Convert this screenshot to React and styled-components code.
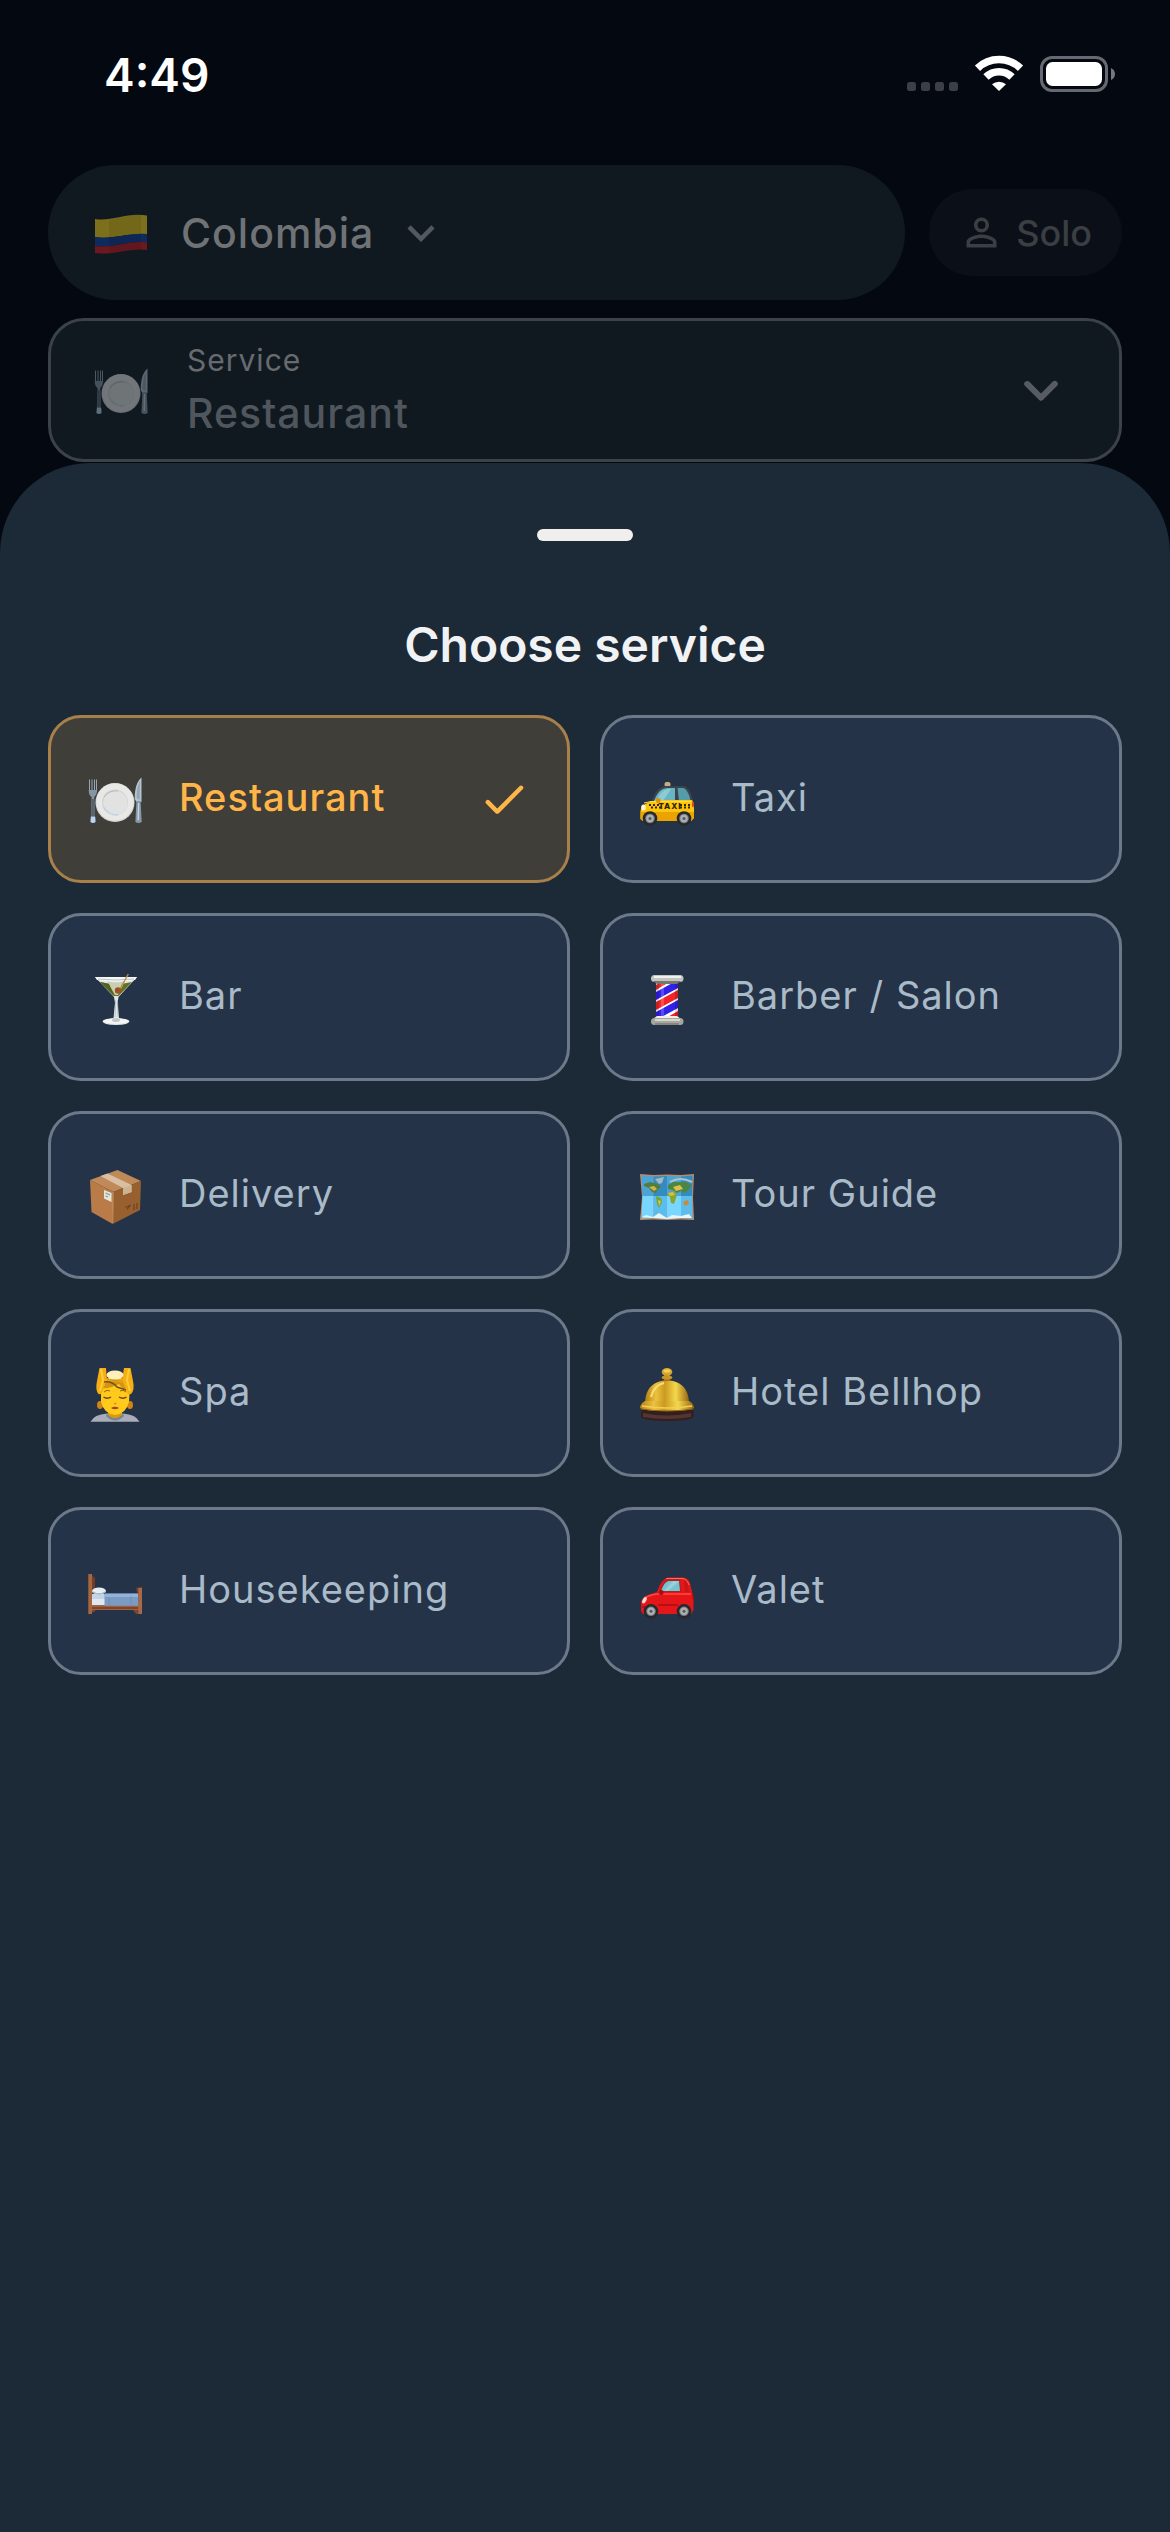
import React, { useState } from 'react';
import styled, { createGlobalStyle } from 'styled-components';

const GlobalStyle = createGlobalStyle`
  * {
    box-sizing: border-box;
  }

  body {
    margin: 0;
    background: #040811;
    font-family: Inter, Roboto, sans-serif;
  }

  button {
    font-family: inherit;
    cursor: pointer;
  }
`

const Screen = styled.div`
  display: flex;
  flex-direction: column;
  min-height: 100vh;
  background: #040811;
`

const StatusBar = styled.div`
  display: flex;
  align-items: center;
  justify-content: space-between;
  height: 150px;
  padding: 0 54px 0 104px;
`

const Clock = styled.time`
  color: #ffffff;
  font-size: 46px;
  font-weight: 600;
  line-height: 60px;
`

const StatusIcons = styled.svg`
  display: block;
  width: 210px;
  height: 40px;
`

const Header = styled.header`
  display: flex;
  flex-direction: column;
  gap: 18px;
  padding: 15px 48px 0;
`

const HeaderRow = styled.div`
  display: flex;
  align-items: center;
  gap: 24px;
`

const CountryButton = styled.button`
  display: flex;
  flex: 1;
  align-items: center;
  height: 135px;
  padding: 0 45px;
  border: 0;
  border-radius: 68px;
  background: #111920;
  color: #707376;
  font-size: 41px;
  font-weight: 500;
  letter-spacing: 1px;
`

const CountryName = styled.span`
  margin: 0 20px 0 32px;
`

const PartyButton = styled.button`
  display: flex;
  align-items: center;
  gap: 12px;
  height: 87px;
  padding: 0 30px;
  border: 0;
  border-radius: 44px;
  background: #0b1018;
  color: #3b3e42;
  font-size: 36px;
  font-weight: 500;
`

const ServiceField = styled.button`
  display: flex;
  align-items: center;
  min-height: 144px;
  padding: 0 42px;
  border: 3px solid #3b424a;
  border-radius: 36px;
  background: #111920;
  letter-spacing: 1px;
  text-align: left;
`

const FieldText = styled.span`
  display: flex;
  flex: 1;
  flex-direction: column;
  margin-left: 38px;
`

const FieldLabel = styled.span`
  color: #676b70;
  font-size: 30px;
  line-height: 45px;
`

const FieldValue = styled.span`
  color: #4f565d;
  font-size: 41px;
  font-weight: 500;
  line-height: 60px;
`

const Sheet = styled.section`
  flex: 1;
  margin-top: 1px;
  padding: 66px 48px;
  border-radius: 90px 90px 0 0;
  background: #1c2937;
`

const Handle = styled.div`
  width: 96px;
  height: 12px;
  margin: 0 auto;
  border-radius: 6px;
  background: #f1efee;
`

const Title = styled.h1`
  margin: 74px 0 40px;
  color: #f1f2f4;
  font-size: 48px;
  font-weight: 600;
  line-height: 60px;
  text-align: center;
`

const ServiceGrid = styled.div`
  display: grid;
  grid-template-columns: 1fr 1fr;
  gap: 30px;
`

const ServiceCard = styled.button`
  display: flex;
  align-items: center;
  height: 168px;
  padding: 0 36px;
  border: 3px solid ${props => props.$selected ? '#a88049' : '#6c798a'};
  border-radius: 33px;
  background: ${props => props.$selected ? '#403e39' : '#243347'};
  color: ${props => props.$selected ? '#ffb547' : '#a9bac8'};
  font-size: 38px;
  font-weight: ${props => props.$selected ? 500 : 400};
  letter-spacing: 1px;
  text-align: left;
`

const ServiceName = styled.span`
  flex: 1;
  margin-left: 36px;
  padding-bottom: 4px;
`

const Picture = styled.svg`
  display: block;
  flex: none;
  width: 56px;
  height: 60px;
  opacity: ${props => props.$dim ? 0.45 : 1};
`

const Glyph = styled.svg`
  display: block;
  flex: none;
  width: ${props => props.$size}px;
  height: ${props => props.$size}px;
  fill: ${props => props.$color || 'currentColor'};
`

const Emoji = ({ dim, children }) => (
  <Picture viewBox="0 0 56 60" aria-hidden="true" $dim={dim}>{children}</Picture>
)

const Icon = ({ size, color, d }) => (
  <Glyph viewBox="0 0 24 24" aria-hidden="true" $size={size} $color={color}><path d={d} /></Glyph>
)

const FlagEmoji = () => (
  <Emoji>
    <path d="M2 16C18 19 34 9 54 12.500V32C36 29 20 37 2 34Z" fill="#7d701c" />
    <path d="M2 34C20 37 36 29 54 31V39.500C36 37 20 46 2 43Z" fill="#102a5d" />
    <path d="M2 43C20 46 36 37 54 39.500V47C36 44 20 53 2 50Z" fill="#6b1820" />
    <path d="M16 17C28 15 37 11 48 12V46C34 45 26 50 16 50Z" fill="#000000" opacity="0.08" />
  </Emoji>
)

const PlateEmoji = ({ dim }) => (
  <Emoji dim={dim}>
    <path d="M2.500 10.500V23M5 10.500V24M7.500 10.500V24M9.500 10.500V23" stroke="#93a6b5" strokeWidth="1" />
    <path d="M1.700 21H10C10 25 8.500 27 7.200 28L8.200 51H3.700L4.600 28C3 27 1.700 25 1.700 21Z" fill="#8396a6" />
    <path d="M4.600 30H7.300L8 47H4Z" fill="#59636c" />
    <path d="M4 48H8.200L8.600 53Q6 55 3.400 53Z" fill="#b8d4f2" />
    <path d="M54.500 8.500C50 12 47.500 20 47.700 30L49.500 33H54.500Z" fill="#b5c3ce" />
    <path d="M52.700 12C50.500 17 49.500 23 49.700 29L52.700 31Z" fill="#91a5b5" />
    <path d="M49.400 32H53.600L54.700 53Q51.500 55 48.400 53Z" fill="#8799a8" />
    <path d="M51 34L50.500 51H52L52.300 34Z" fill="#c3d5e4" />
    <circle cx="28" cy="33.500" r="19.500" fill="#d6d6d6" />
    <circle cx="28" cy="33" r="18.600" fill="#e8e8e7" />
    <circle cx="28" cy="33.500" r="13" fill="#d0d1d2" />
    <circle cx="28.400" cy="34" r="12.200" fill="#e2e2e2" />
    <path d="M16.500 38Q22 46 31 46" fill="none" stroke="#b9d2eb" strokeWidth="1.300" />
    <path d="M17 28Q22 21 31 22" fill="none" stroke="#b9babb" strokeWidth="1" />
  </Emoji>
)

const Wheel = ({ x, y }) => (
  <>
    <circle cx={x} cy={y} r="7.300" fill="#26282c" />
    <circle cx={x} cy={y} r="4.800" fill="#777b80" />
    <circle cx={x} cy={y} r="3.700" fill="#adb0b3" />
    <circle cx={x} cy={y} r="1.500" fill="#55585c" />
  </>
)

const TaxiEmoji = () => (
  <Emoji>
    <rect x="25.500" y="13" width="6" height="5" rx="2" fill="#c8ad82" />
    <path d="M12 33C16 22 21 17 28 17H45C50 18 53 26 54 33Z" fill="#3b444c" />
    <path d="M15 32C19 22 23 19 29 19H36V32Z" fill="#69b4c2" />
    <path d="M38.500 19H44C48 20 50.500 26 51.500 32H40Z" fill="#559cab" />
    <path d="M18 31Q22 21 29 20H32L24 32Z" fill="#8ccbd3" />
    <path d="M1.500 50V42C2 37 6 34.500 12 32.500L19 31H53C55 34 55 38 55 43V49L52 52H4Z" fill="#ffc50b" />
    <path d="M1.500 43H55V49L52 52H4L1.500 50Z" fill="#eba300" />
    <path d="M5 34L12 32.500H52" fill="none" stroke="#ffe04b" strokeWidth="1" />
    <path d="M10 36H21M12 38.500H22M41 36H53M41 38.500H53" stroke="#32280b" strokeWidth="2" strokeDasharray="2 2" />
    <text x="31" y="40" fill="#29210d" fontSize="8" fontWeight="800" textAnchor="middle">TAXI</text>
    <rect x="17" y="29" width="4.500" height="5" rx="2" fill="#dc9305" />
    <ellipse cx="4.500" cy="38.500" rx="2.300" ry="3" fill="#fff7cd" />
    <rect x="53" y="33" width="2" height="5" rx="1" fill="#e34320" />
    <Wheel x={11} y={49.5} />
    <Wheel x={45} y={49.5} />
  </Emoji>
)

const BarEmoji = () => (
  <Emoji>
    <path d="M8 10H50L31.500 30L30.600 36L32 51Q37 52 42.500 54Q42 58 29 58Q16 58 15.500 54Q20 52 26.500 51L28 36L27 30Z" fill="#dfe6e5" />
    <path d="M13 15Q29 19 45 15L31.500 29H27Z" fill="#647024" />
    <path d="M20 14Q29 17 38 14L31 28H28Z" fill="#c9cfb4" />
    <path d="M13 15L27 29L22 17Z" fill="#52631d" />
    <path d="M8 10H50L48 13Q29 16 10 13Z" fill="#f5f7f6" />
    <path d="M11 12Q29 14 47 12" fill="none" stroke="#bdc5c4" strokeWidth="1" />
    <path d="M41.300 7L33 22" stroke="#b98c43" strokeWidth="1.400" />
    <circle cx="31" cy="23.500" r="3.200" fill="#965a20" />
    <circle cx="30" cy="23" r="1.300" fill="#bd3a25" />
    <path d="M28.600 33L28 50M30.500 33L31 50" stroke="#aab5bb" strokeWidth="0.700" />
    <ellipse cx="29" cy="54" rx="13" ry="2.800" fill="#f5f6f4" />
    <ellipse cx="29" cy="53" rx="4" ry="2" fill="#c2c7c7" />
  </Emoji>
)

const BarberEmoji = () => (
  <Emoji>
    <clipPath id="pole"><rect x="17" y="16" width="22" height="35" /></clipPath>
    <g clipPath="url(#pole)">
      <rect x="17" y="16" width="22" height="35" fill="#ffffff" />
      <path d="M17 18L32 10V14L17 23Z" fill="#ed2a2a" />
      <path d="M17 25L39 13V21L17 33Z" fill="#3020e8" />
      <path d="M17 35L39 23V31L17 43Z" fill="#f32327" />
      <path d="M17 45L39 33V41L17 53Z" fill="#3120e8" />
      <path d="M27 51L39 44V54H24Z" fill="#f32327" />
      <path d="M17 16H20V51H17ZM36 16H39V51H36Z" fill="#000000" opacity="0.15" />
      <path d="M22 16H25V51H22Z" fill="#ffffff" opacity="0.2" />
    </g>
    <rect x="12" y="8" width="32.500" height="7" rx="3.500" fill="#c4c5c0" />
    <path d="M15 10H42" stroke="#f2f2ed" strokeWidth="2" />
    <path d="M14 14H42L38 17H18Z" fill="#77776f" />
    <path d="M18 49H38L42 52H14Z" fill="#efefea" />
    <rect x="12" y="51" width="32.500" height="7" rx="3.500" fill="#a6a79f" />
    <path d="M16 53H41" stroke="#d6d6d0" strokeWidth="2" />
    <path d="M16 57H40" stroke="#67675f" strokeWidth="1" />
  </Emoji>
)

const DeliveryEmoji = () => (
  <Emoji>
    <path d="M30.500 5L54 16L26.300 27L3 15Z" fill="#c08958" />
    <path d="M3 15L26.300 27L25.700 59L4.500 47Z" fill="#b97c49" />
    <path d="M54 16L26.300 27L25.700 59L53 45Z" fill="#98602f" />
    <path d="M13.500 11L20.500 8.500L44.500 20V27L36 30V23Z" fill="#d9bfa3" />
    <path d="M36 23L44.500 20V27L36 30Z" fill="#cdb293" />
    <path d="M26.300 27L25.700 58" stroke="#d09b68" strokeWidth="0.800" />
    <path d="M17 25L24.500 28V37L17 33.500Z" fill="#e8e5d9" />
    <path d="M18.500 28L23 30M18.500 31L21 32" stroke="#6da4ac" strokeWidth="1.300" />
    <path d="M38.500 42.500L43.500 40L40 44.500M47 39V45M50 38V44" fill="none" stroke="#6a4422" strokeWidth="1.200" />
  </Emoji>
)

const MapEmoji = () => (
  <Emoji>
    <path d="M1 9L14.500 10L28 9.500L42 10L55 9L54 32L55 55L42 54.500L28 55L14.500 54.500L1 55L3 32Z" fill="#b48e70" />
    <path d="M2.500 10.500L14.500 11.500V31H3.500ZM28 11L42 11.500V31H28Z" fill="#4ba3d8" />
    <path d="M14.500 11.500L28 11V31H14.500ZM42 11.500L53.500 10.500L53 31H42Z" fill="#348bbf" />
    <path d="M3.500 31H14.500V53L2.500 53.500ZM28 31H42V53L28 53.500Z" fill="#79d7ff" />
    <path d="M14.500 31H28V53.500L14.500 53ZM42 31H53L53.500 53.500L42 53Z" fill="#5cbdec" />
    <path d="M5 19L11 17L19 19L22 22L18 25L17 28L13 27L10 23L5 21Z" fill="#527d3b" />
    <path d="M16 14L25 12L23 18L20 19Z" fill="#a3bac5" />
    <path d="M10 22L15 21L18 24L15 26Z" fill="#d6b447" />
    <path d="M17 31L22 33L23 37L20 43L18 39Z" fill="#74a534" />
    <path d="M19 35L22 36L20 41Z" fill="#d7c64a" />
    <path d="M29 20L34 17L47 17L53 20L50 24L46 28L42 26L38 28L34 25L29 24Z" fill="#4d8644" />
    <path d="M30 27L35 26L38 30L35 39L32 38L31 32L28 30Z" fill="#86a72e" />
    <path d="M34 22L41 20L44 24L37 26Z" fill="#dfbf48" />
    <path d="M29 28L34 27L36 30L31 31Z" fill="#d8bc52" />
    <path d="M44 37L49 35L50 39L46 41Z" fill="#d18732" />
    <path d="M31 17Q41 11 53 17" fill="none" stroke="#abc5cf" strokeWidth="2" />
    <path d="M3 52L7 50L14 52L20 48L28 53L33 50L42 51L50 49L53 53L42 53L28 54L14 53Z" fill="#e7f6fb" />
  </Emoji>
)

const SpaEmoji = () => (
  <Emoji>
    <path d="M3.500 58.700Q7 51.500 20 50.500H36Q49 51.500 52.500 58.700Z" fill="#a9adba" />
    <path d="M20 50.500Q28 59 36 50.500L37 53Q28 62 19 53Z" fill="#81838b" />
    <path d="M21 46H35V52Q28 58 21 52Z" fill="#d99a09" />
    <ellipse cx="13" cy="42" rx="3" ry="4" fill="#cf8514" />
    <ellipse cx="43" cy="42" rx="3" ry="4" fill="#cf8514" />
    <path d="M14 22Q18 14 28 14Q39 14 43 23L42 39Q39 51 28 52Q17 51 14 39Z" fill="#ffca1b" />
    <path d="M14 29Q14 15 28 16Q42 16 43 30Q36 27 32 21Q23 26 14 25Z" fill="#d19414" />
    <path d="M12.500 5H19L20 17L17 24Q15 33 11.500 31Q8 27 10 18Z" fill="#f7ae12" />
    <path d="M37 5H43.500L46 18Q48 27 44 31Q40 33 38 24L35 17Z" fill="#f7ae12" />
    <path d="M14 6L16 17L13 28M42 6L40 17L43 28" fill="none" stroke="#ffce39" strokeWidth="2" />
    <path d="M20 15Q28 21 36 15L35 20Q28 17 20 20Z" fill="#e3a113" />
    <ellipse cx="28" cy="12" rx="8.500" ry="4.500" fill="#fff0bb" />
    <path d="M17 19Q25 18 30 24L39 27" fill="none" stroke="#78501e" strokeWidth="1.500" />
    <path d="M17 29Q20 26 23 28M33 28Q36 26 39 29" fill="none" stroke="#9b620c" strokeWidth="1" />
    <path d="M16.500 34Q20 36.500 24 34M32 34Q36 36.500 39.500 34" fill="none" stroke="#704012" strokeWidth="1.400" />
    <path d="M27 40Q28 42 29.500 40" fill="none" stroke="#c87910" strokeWidth="1" />
    <path d="M24 45Q28 42.500 32 45Q28 47.500 24 45Z" fill="#a64122" />
  </Emoji>
)

const BellEmoji = () => (
  <Emoji>
    <linearGradient id="brass">
      <stop offset="0" stopColor="#b47d16" />
      <stop offset="0.250" stopColor="#ebc23f" />
      <stop offset="0.450" stopColor="#cc9a20" />
      <stop offset="0.700" stopColor="#f4d84d" />
      <stop offset="1" stopColor="#96640f" />
    </linearGradient>
    <path d="M2 48Q3 45 8 45H48Q53 45 54.500 48V54Q50 58 28 58Q6 58 2 54Z" fill="#31201d" />
    <path d="M4 50Q28 55 52 50V54Q28 58 4 54Z" fill="#563431" />
    <path d="M6 41C6 25 15 17.500 28 17.500S50 25 50 41Z" fill="url(#brass)" />
    <path d="M6 38H50Q55 41 55 45Q51 48 28 48Q5 48 1 45Q1 41 6 38Z" fill="url(#brass)" />
    <path d="M3 43Q28 47 53 43" fill="none" stroke="#f2ce51" strokeWidth="1.500" />
    <path d="M2 46Q28 50 54 46" fill="none" stroke="#916315" strokeWidth="1" />
    <path d="M12 34Q15 22 25 20" fill="none" stroke="#f8df71" strokeWidth="2" />
    <rect x="25" y="11" width="6" height="7" fill="#a57219" />
    <ellipse cx="28" cy="9" rx="5.300" ry="4" fill="#d4a42d" />
    <ellipse cx="28" cy="8" rx="3.500" ry="1.700" fill="#f1d05b" />
    <ellipse cx="28" cy="14.500" rx="5.300" ry="2" fill="#c7942a" />
  </Emoji>
)

const BedEmoji = () => (
  <Emoji>
    <path d="M5 14L8 17V45H5ZM49 27L55 25.500V30L50 32Z" fill="#6f3e29" />
    <path d="M5 41H52V49H5Z" fill="#a3623f" />
    <path d="M5 46H52V48H5Z" fill="#7d4630" />
    <path d="M5 33H19V44H5Z" fill="#c2d4e6" />
    <path d="M5 38H18V44H5Z" fill="#e0e8ef" />
    <rect x="17.500" y="32.300" width="34" height="12.500" rx="1" fill="#7a9bc4" />
    <path d="M18 33H51V36H18Z" fill="#94b1d6" />
    <path d="M22 37V44M44 35V44" stroke="#7090ba" strokeWidth="1" />
    <ellipse cx="12" cy="30" rx="7" ry="3.500" fill="#e6eef4" />
    <path d="M6 31Q12 35 18 31" fill="none" stroke="#9fb5c7" strokeWidth="1.500" />
    <path d="M1.300 13H5V53H1.300Z" fill="#a8663f" />
    <path d="M5 49H9L7 51H5ZM46 49H51.500V53H49Z" fill="#7d4630" />
    <path d="M51.300 27H55V53H51.300Z" fill="#aa6944" />
  </Emoji>
)

const CarEmoji = () => (
  <Emoji>
    <path d="M2 50V41Q3 35 15 32L18 31Q22 18 29 16.500H43Q49 16.500 51 22L54.500 37V49L52 53H4Z" fill="#e4161a" />
    <path d="M20 31Q24 20 29 18.500H41L42 31Z" fill="#a02628" />
    <path d="M22 30Q25 21 29.500 20H40L41 30Z" fill="#79c3d0" />
    <path d="M25 30L34 20H40L29 30Z" fill="#94d3da" />
    <path d="M45 19Q48 20 49 25L50 31H46Z" fill="#c71518" />
    <path d="M27 17.500H43Q48 17.500 50 24" fill="none" stroke="#ff6a5c" strokeWidth="1" />
    <path d="M5 37Q13 33 20 33H52" fill="none" stroke="#ff493e" strokeWidth="1.500" />
    <path d="M19 44H39M3 46H6" stroke="#a80f13" strokeWidth="1.500" />
    <rect x="20" y="29" width="4.500" height="5" rx="2" fill="#a70f15" />
    <ellipse cx="5.500" cy="39" rx="1.800" ry="3.500" fill="#f7d6cf" transform="rotate(30 5 39)" />
    <path d="M53 34H55V39H54Z" fill="#a60b10" />
    <Wheel x={12} y={50.3} />
    <Wheel x={45} y={50.3} />
  </Emoji>
)

const services = [
  { name: 'Restaurant', Emoji: PlateEmoji },
  { name: 'Taxi', Emoji: TaxiEmoji },
  { name: 'Bar', Emoji: BarEmoji },
  { name: 'Barber / Salon', Emoji: BarberEmoji },
  { name: 'Delivery', Emoji: DeliveryEmoji },
  { name: 'Tour Guide', Emoji: MapEmoji },
  { name: 'Spa', Emoji: SpaEmoji },
  { name: 'Hotel Bellhop', Emoji: BellEmoji },
  { name: 'Housekeeping', Emoji: BedEmoji },
  { name: 'Valet', Emoji: CarEmoji },
]

const paths = {
  expand: 'M16.590 8.590 12 13.170 7.410 8.590 6 10l6 6 6-6z',
  expandRound: 'M8.120 9.290 12 13.170l3.880-3.880a.996.996 0 1 1 1.410 1.410l-4.590 4.590a.996.996 0 0 1-1.410 0L6.700 10.700a.996.996 0 0 1 0-1.410c.39-.38 1.030-.39 1.420 0z',
  check: 'M9 16.170 5.530 12.700a.996.996 0 1 0-1.410 1.410l4.180 4.180c.39.39 1.020.39 1.410 0L20.290 7.710a.996.996 0 1 0-1.410-1.410L9 16.170z',
  person: 'M12 5.900a2.100 2.100 0 1 1 0 4.200 2.100 2.100 0 0 1 0-4.200m0 9c2.970 0 6.100 1.460 6.100 2.100v1.100H5.900V17c0-.64 3.130-2.100 6.100-2.100M12 4C9.790 4 8 5.790 8 8s1.790 4 4 4 4-1.790 4-4-1.790-4-4-4m0 9c-2.670 0-8 1.340-8 4v3h16v-3c0-2.660-5.330-4-8-4',
}

export default function App() {
  const [selected, setSelected] = useState('Restaurant');
  const current = services.find(service => service.name === selected);

  return (
    <>
      <GlobalStyle />
      <Screen>
        <StatusBar>
          <Clock>4:49</Clock>
          <StatusIcons viewBox="0 0 210 40" aria-hidden="true">
            <g fill="#3c3f45">
              <rect x="1" y="27" width="9" height="9" rx="2.500" />
              <rect x="15" y="27" width="9" height="9" rx="2.500" />
              <rect x="29" y="27" width="9" height="9" rx="2.500" />
              <rect x="43" y="27" width="9" height="9" rx="2.500" />
            </g>
            <g fill="none" stroke="#ffffff" strokeWidth="7.500">
              <path d="M71.500 13.200A31 31 0 0 1 114.500 13.200" />
              <path d="M80 22A18.500 18.500 0 0 1 106 22" />
            </g>
            <path d="M86 29.300A10.500 10.500 0 0 1 100 29.300L93 36Z" fill="#ffffff" />
            <rect x="135.500" y="2.500" width="65" height="33" rx="10.500" fill="none" stroke="#66696f" strokeWidth="3" />
            <rect x="140" y="7" width="56" height="24" rx="6.500" fill="#ffffff" />
            <path d="M205 13Q209 15 209 19T205 25Z" fill="#74777c" />
          </StatusIcons>
        </StatusBar>
        <Header>
          <HeaderRow>
            <CountryButton type="button">
              <FlagEmoji />
              <CountryName>Colombia</CountryName>
              <Icon size={54} color="#54595f" d={paths.expand} />
            </CountryButton>
            <PartyButton type="button">
              <Icon size={45} d={paths.person} />
              Solo
            </PartyButton>
          </HeaderRow>
          <ServiceField type="button" aria-haspopup="dialog" aria-expanded="true">
            <current.Emoji dim />
            <FieldText>
              <FieldLabel>Service</FieldLabel>
              <FieldValue>{selected}</FieldValue>
            </FieldText>
            <Icon size={72} color="#565c62" d={paths.expandRound} />
          </ServiceField>
        </Header>
        <Sheet role="dialog" aria-labelledby="sheet-title">
          <Handle />
          <Title id="sheet-title">Choose service</Title>
          <ServiceGrid>
            {services.map(({ name, Emoji: Art }) => (
              <ServiceCard
                key={name}
                type="button"
                aria-pressed={name === selected}
                $selected={name === selected}
                onClick={() => setSelected(name)}
              >
                <Art />
                <ServiceName>{name}</ServiceName>
                {name === selected && <Icon size={54} d={paths.check} />}
              </ServiceCard>
            ))}
          </ServiceGrid>
        </Sheet>
      </Screen>
    </>
  );
}
